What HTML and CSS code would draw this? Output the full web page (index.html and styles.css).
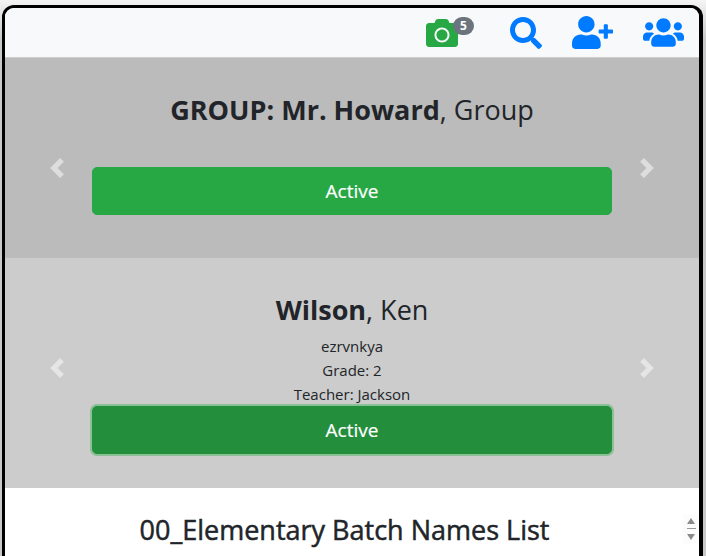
FILE: index.html
```html
<!DOCTYPE html>
<html>
<head>
    <title>Groups</title>
    <link rel="stylesheet" href="styles.css">
</head>
<body>
<div class="frame">
    <nav class="topbar">
        <a class="navIcon cameraLink">
            <svg class="icon square green" viewBox="0 0 512 512"><path d="M512 144v288c0 26.5-21.5 48-48 48H48c-26.5 0-48-21.5-48-48V144c0-26.5 21.5-48 48-48h88l12.3-32.9c7-18.7 24.9-31.1 44.9-31.1h125.5c20 0 37.9 12.4 44.9 31.1L376 96h88c26.5 0 48 21.5 48 48zM376 288c0-66.2-53.8-120-120-120s-120 53.8-120 120 53.8 120 120 120 120-53.8 120-120zm-32 0c0 48.5-39.5 88-88 88s-88-39.5-88-88 39.5-88 88-88 88 39.5 88 88z"/></svg>
            <span class="badge">5</span>
        </a>
        <a class="navIcon">
            <svg class="icon square" viewBox="0 0 512 512"><path d="M505 442.7L405.3 343c-4.5-4.5-10.6-7-17-7H372c27.6-35.3 44-79.7 44-128C416 93.1 322.9 0 208 0S0 93.1 0 208s93.1 208 208 208c48.3 0 92.7-16.4 128-44v16.3c0 6.4 2.5 12.5 7 17l99.7 99.7c9.4 9.4 24.6 9.4 33.9 0l28.3-28.3c9.4-9.4 9.4-24.6.1-34zM208 336c-70.7 0-128-57.2-128-128 0-70.7 57.2-128 128-128 70.7 0 128 57.2 128 128 0 70.7-57.2 128-128 128z"/></svg>
        </a>
        <a class="navIcon">
            <svg class="icon wide" viewBox="0 0 640 512"><path d="M624 208h-64v-64c0-8.8-7.2-16-16-16h-32c-8.8 0-16 7.2-16 16v64h-64c-8.8 0-16 7.2-16 16v32c0 8.8 7.2 16 16 16h64v64c0 8.8 7.2 16 16 16h32c8.8 0 16-7.2 16-16v-64h64c8.8 0 16-7.2 16-16v-32c0-8.8-7.2-16-16-16zm-400 48c70.7 0 128-57.3 128-128S294.7 0 224 0 96 57.3 96 128s57.3 128 128 128zm89.6 32h-16.7c-22.2 10.2-46.9 16-72.9 16s-50.6-5.8-72.9-16h-16.7C60.2 288 0 348.2 0 422.4V464c0 26.5 21.5 48 48 48h352c26.5 0 48-21.5 48-48v-41.6c0-74.2-60.2-134.4-134.4-134.4z"/></svg>
        </a>
        <a class="navIcon">
            <svg class="icon wide" viewBox="0 0 640 512"><path d="M96 224c35.3 0 64-28.7 64-64s-28.7-64-64-64-64 28.7-64 64 28.7 64 64 64zm448 0c35.3 0 64-28.7 64-64s-28.7-64-64-64-64 28.7-64 64 28.7 64 64 64zm32 32h-64c-17.6 0-33.5 7.1-45.1 18.6 40.3 22.1 68.9 62 75.1 109.4h66c17.7 0 32-14.3 32-32v-32c0-35.3-28.7-64-64-64zm-256 0c61.9 0 112-50.1 112-112S381.9 32 320 32 208 82.1 208 144s50.1 112 112 112zm76.8 32h-8.3c-20.8 10-43.9 16-68.5 16s-47.6-6-68.5-16h-8.3C179.6 288 128 339.6 128 403.2V432c0 26.5 21.5 48 48 48h288c26.5 0 48-21.5 48-48v-28.8c0-63.6-51.6-115.2-115.2-115.2zm-223.7-13.4C161.5 263.1 145.6 256 128 256H64c-35.3 0-64 28.7-64 64v32c0 17.7 14.3 32 32 32h65.9c6.3-47.4 34.9-87.3 75.2-109.4z"/></svg>
        </a>
    </nav>

    <section class="slide groupSlide">
        <svg class="arrow arrowLeft" viewBox="0 0 8 8"><path d="M5.25 0l-4 4 4 4 1.5-1.5L4.25 4l2.5-2.5L5.25 0z"/></svg>
        <svg class="arrow arrowRight" viewBox="0 0 8 8"><path d="M2.75 0l-1.5 1.5L3.75 4l-2.5 2.5L2.75 8l4-4-4-4z"/></svg>
        <h2 class="slideTitle"><strong>GROUP: Mr. Howard</strong>, Group</h2>
        <button class="activeButton">Active</button>
    </section>

    <section class="slide studentSlide">
        <svg class="arrow arrowLeft" viewBox="0 0 8 8"><path d="M5.25 0l-4 4 4 4 1.5-1.5L4.25 4l2.5-2.5L5.25 0z"/></svg>
        <svg class="arrow arrowRight" viewBox="0 0 8 8"><path d="M2.75 0l-1.5 1.5L3.75 4l-2.5 2.5L2.75 8l4-4-4-4z"/></svg>
        <h2 class="slideTitle"><strong>Wilson</strong>, Ken</h2>
        <div class="details">
            <div>ezrvnkya</div>
            <div>Grade: 2</div>
            <div>Teacher: Jackson</div>
        </div>
        <button class="activeButton focused">Active</button>
    </section>

    <section class="listSection">
        <h3 class="listTitle">00_Elementary Batch Names List</h3>
        <div class="spinner">
            <span class="spinUp"></span>
            <span class="spinLine"></span>
            <span class="spinDown"></span>
        </div>
    </section>
</div>
</body>
</html>
```

FILE: styles.css
```css
html, body {
	height: 100%;
	overflow: hidden;
}

body {
	box-sizing: border-box;
	margin: 0;
	padding: 5px 3px 0 2px;
	background: linear-gradient(#F4F4F4, #C8C8C8 40px);
	font-family: "Open Sans", "Noto Sans", sans-serif;
	color: #212529;
}

.frame {
	box-sizing: border-box;
	height: 100%;
	border: 3px solid #000000;
	border-right-width: 4px;
	border-bottom: 0;
	border-radius: 12px 12px 0 0;
	background-color: #FFFFFF;
	overflow: hidden;
}

.topbar {
	display: flex;
	justify-content: flex-end;
	align-items: center;
	gap: 30px;
	height: 49px;
	padding-right: 15px;
	background-color: #F8F9FA;
	border-bottom: 1px solid #CFCFCF;
}

.navIcon {
	position: relative;
	display: block;
}

.cameraLink {
	margin-right: 22px;
}

.icon {
	display: block;
	fill: #007BFF;
}

.square {
	width: 32px;
	height: 32px;
}

.wide {
	width: 41px;
	height: 33px;
}

.green {
	fill: #28A745;
}

.badge {
	position: absolute;
	top: 0;
	left: 27px;
	width: 21px;
	height: 18px;
	border-radius: 9px;
	background-color: #6C757D;
	color: #FFFFFF;
	font-size: 12px;
	font-weight: 700;
	line-height: 18px;
	text-align: center;
}

.slide {
	position: relative;
	display: flex;
	flex-direction: column;
	align-items: center;
}

.groupSlide {
	height: 200px;
	background-color: #BBBBBB;
}

.studentSlide {
	height: 230px;
	background-color: #CCCCCC;
}

.arrow {
	position: absolute;
	top: 100px;
	width: 20px;
	height: 20px;
	fill: #FFFFFF;
	opacity: .5;
}

.arrowLeft {
	left: 42px;
}

.arrowRight {
	right: 42px;
}

.slideTitle {
	margin: 32px 0 0;
	font-size: 27px;
	font-weight: 400;
	line-height: 40px;
}

.groupSlide .slideTitle {
	margin-bottom: 37px;
}

.details {
	margin-top: 4px;
	font-size: 15px;
	line-height: 24px;
	text-align: center;
}

.activeButton {
	display: block;
	flex: none;
	width: 520px;
	height: 48px;
	padding: 0;
	border: 1px solid #28A745;
	border-radius: 5px;
	background-color: #28A745;
	color: #FFFFFF;
	font-family: inherit;
	font-size: 19px;
	-webkit-text-stroke: .2px #FFFFFF;
}

.focused {
	border-color: #238E3B;
	background-color: #238E3B;
	box-shadow: 0 0 0 2px rgba(72, 180, 97, .5);
}

.listSection {
	position: relative;
	padding: 22px 15px 0 0;
	text-align: center;
}

.listTitle {
	margin: 0;
	font-size: 27px;
	font-weight: 400;
	line-height: 40px;
	-webkit-text-stroke: .5px #212529;
}

.spinner {
	position: absolute;
	top: 26px;
	right: 0;
	display: flex;
	flex-direction: column;
	align-items: center;
	width: 16px;
	padding: 4px 0;
	background-color: #FCFCFC;
}

.spinUp, .spinDown {
	width: 0;
	height: 0;
	border-left: 4px solid transparent;
	border-right: 4px solid transparent;
}

.spinUp {
	border-bottom: 6px solid #8A8A8A;
}

.spinDown {
	border-top: 6px solid #8A8A8A;
}

.spinLine {
	width: 9px;
	height: 1px;
	margin: 4px 0 5px;
	background-color: #9A9A9A;
}
```
